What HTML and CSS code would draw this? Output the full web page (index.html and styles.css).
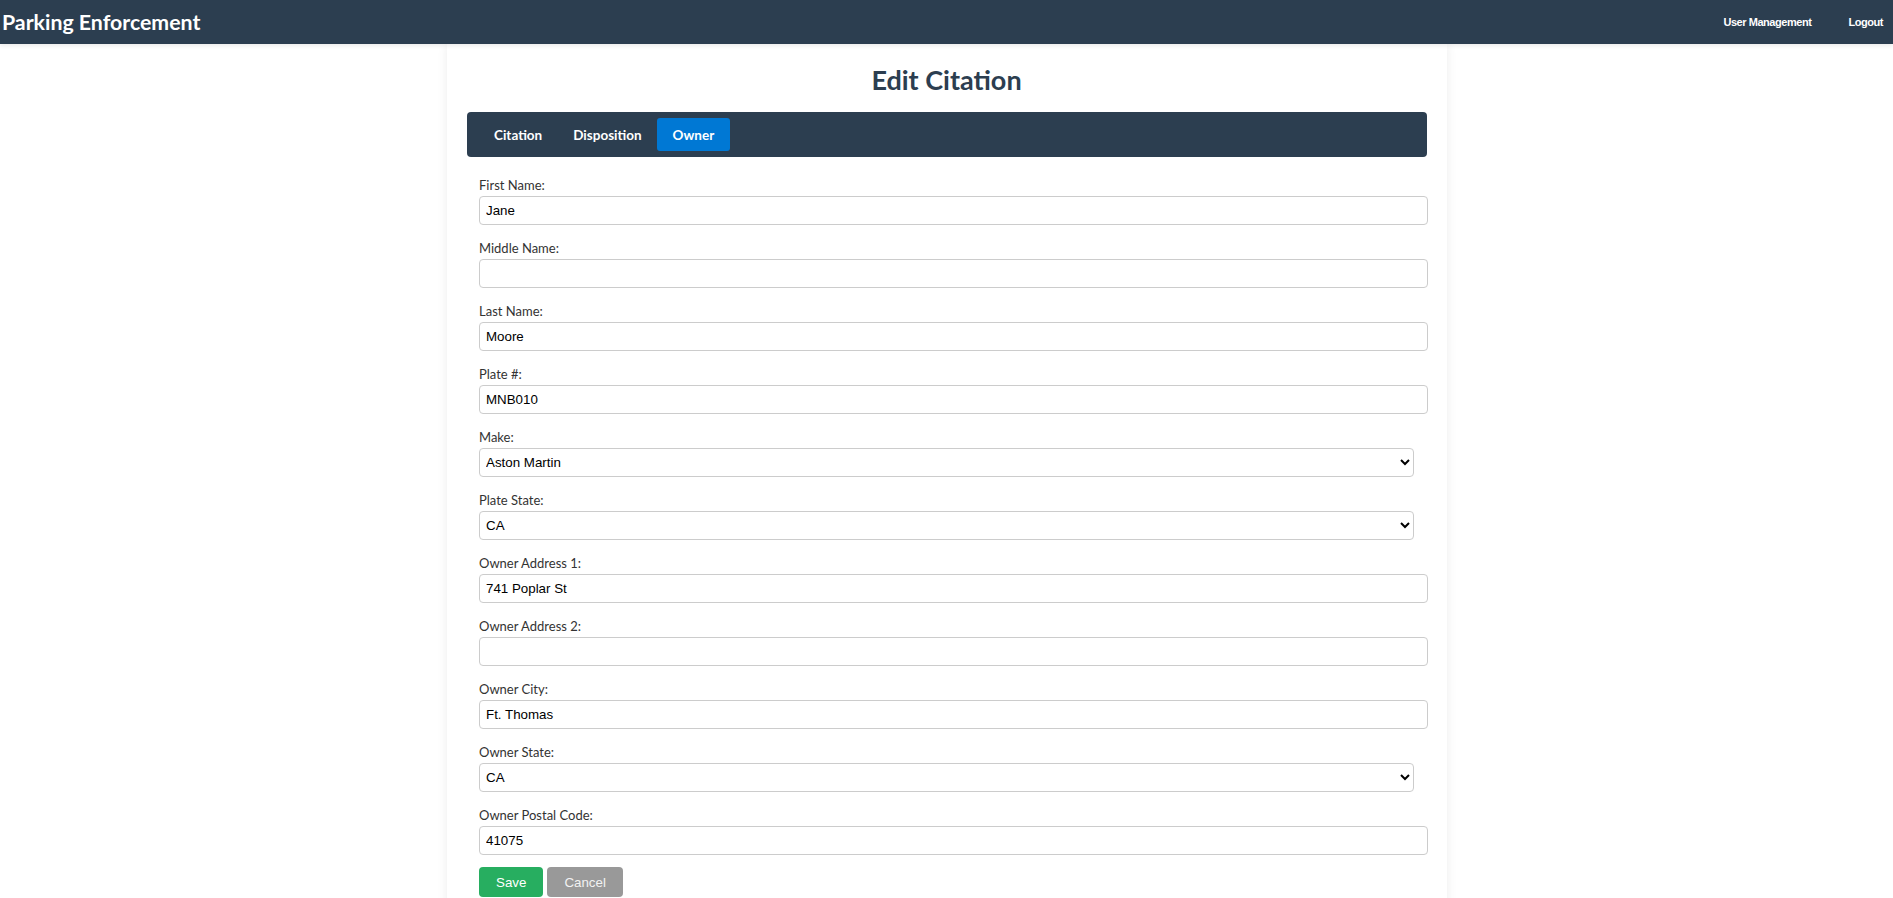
FILE: index.html
```html
<!DOCTYPE html>
<html lang="en">
<head>
<meta charset="utf-8">
<title>Parking Enforcement - Edit Citation</title>
<link rel="stylesheet" href="styles.css">
</head>
<body>
<header class="topbar">
  <div class="brand">Parking Enforcement</div>
  <nav class="topnav">
    <a href="#" class="topnav-link">User Management</a>
    <a href="#" class="topnav-link">Logout</a>
  </nav>
</header>
<main class="card">
  <h2 class="page-title">Edit Citation</h2>
  <div class="tabs">
    <a href="#" class="tab">Citation</a>
    <a href="#" class="tab">Disposition</a>
    <a href="#" class="tab tab-active">Owner</a>
  </div>
  <form class="form">
    <div class="field">
      <label class="label">First Name:</label>
      <input class="input" type="text" value="Jane">
    </div>
    <div class="field">
      <label class="label">Middle Name:</label>
      <input class="input" type="text" value="">
    </div>
    <div class="field">
      <label class="label">Last Name:</label>
      <input class="input" type="text" value="Moore">
    </div>
    <div class="field">
      <label class="label">Plate #:</label>
      <input class="input" type="text" value="MNB010">
    </div>
    <div class="field">
      <label class="label">Make:</label>
      <select class="select"><option>Aston Martin</option></select>
    </div>
    <div class="field">
      <label class="label">Plate State:</label>
      <select class="select"><option>CA</option></select>
    </div>
    <div class="field">
      <label class="label">Owner Address 1:</label>
      <input class="input" type="text" value="741 Poplar St">
    </div>
    <div class="field">
      <label class="label">Owner Address 2:</label>
      <input class="input" type="text" value="">
    </div>
    <div class="field">
      <label class="label">Owner City:</label>
      <input class="input" type="text" value="Ft. Thomas">
    </div>
    <div class="field">
      <label class="label">Owner State:</label>
      <select class="select"><option>CA</option></select>
    </div>
    <div class="field">
      <label class="label">Owner Postal Code:</label>
      <input class="input" type="text" value="41075">
    </div>
    <div class="actions">
      <button type="button" class="btn btn-save">Save</button>
      <button type="button" class="btn btn-cancel">Cancel</button>
    </div>
  </form>
</main>
</body>
</html>
```
FILE: styles.css
```css
html, body {
  margin: 0;
  padding: 0;
  background: #ffffff;
}
body {
  font-family: "Lato", "Open Sans", sans-serif;
  color: #333333;
}
.topbar {
  height: 44px;
  background: #2c3e50;
  display: flex;
  align-items: center;
  justify-content: space-between;
  padding: 0 10px 0 2px;
  box-shadow: 0 2px 4px rgba(0,0,0,0.08);
  position: relative;
  z-index: 1;
}
.brand {
  color: #ffffff;
  font-weight: 700;
  font-size: 21.3px;
}
.topnav {
  display: flex;
  gap: 37px;
}
.topnav-link {
  color: #ffffff;
  text-decoration: none;
  font-family: "Liberation Sans", Arial, sans-serif;
  font-weight: 700;
  font-size: 11px;
  letter-spacing: -0.45px;
}
.card {
  width: 1000px;
  margin: 0 auto;
  box-sizing: border-box;
  padding: 20px 20px 20px;
  background: #ffffff;
  box-shadow: 0 0 10px rgba(0,0,0,0.08);
}
.page-title {
  margin: 0 0 16px;
  text-align: center;
  font-size: 27px;
  line-height: 32px;
  font-weight: 700;
  color: #2c3e50;
}
.tabs {
  background: #2c3e50;
  border-radius: 4px;
  padding: 6px 12px;
  display: flex;
}
.tab {
  color: #ffffff;
  text-decoration: none;
  font-weight: 700;
  font-size: 13.5px;
  line-height: 17px;
  padding: 9px 15.5px 7px;
  border-radius: 3px;
}
.tab-active {
  background: #0078d4;
}
.form {
  padding: 17px 12.5px 0;
}
.field {
  margin-bottom: 12px;
}
.label {
  display: block;
  font-size: 13px;
  line-height: 22px;
  margin-bottom: 0;
  color: #333333;
}
.input {
  display: block;
  width: 100%;
  box-sizing: content-box;
  padding: 6px;
  margin: 0;
  border: 1px solid #cccccc;
  border-radius: 4px;
  font-family: "Liberation Sans", Arial, sans-serif;
  font-size: 13.33px;
  line-height: 15px;
  height: 15px;
  color: #000000;
  background: #ffffff;
}
.select {
  display: block;
  width: 100%;
  box-sizing: border-box;
  height: 29px;
  padding: 0 2px;
  margin: 0;
  border: 1px solid #cccccc;
  border-radius: 4px;
  font-family: "Liberation Sans", Arial, sans-serif;
  font-size: 13.33px;
  color: #000000;
  background: #ffffff;
}
.actions {
  display: flex;
  gap: 4px;
}
.btn {
  height: 30px;
  padding: 0 17px;
  border: none;
  border-radius: 4px;
  font-family: "Liberation Sans", Arial, sans-serif;
  font-size: 13.33px;
  color: #ffffff;
  cursor: pointer;
}
.btn-save {
  background: #27ae60;
}
.btn-cancel {
  background: #999999;
  color: #f2f2f2;
}
```
